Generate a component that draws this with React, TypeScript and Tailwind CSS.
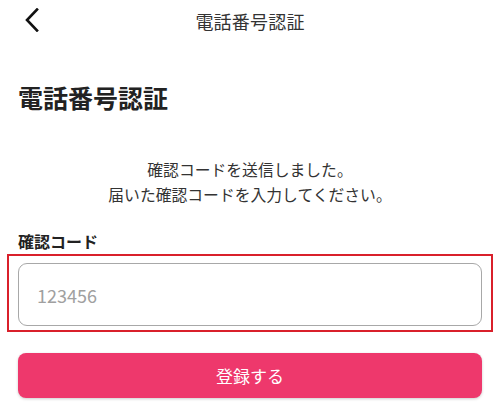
export default function App() {
  const font = { fontFamily: '"Noto Sans CJK JP", "Noto Sans", sans-serif' };
  return (
    <div className="w-[500px] h-[418px] bg-white overflow-hidden" style={font}>
      {/* header */}
      <div className="relative flex items-center justify-center h-[42px]">
        <button className="absolute left-[22px] top-[7px] w-[20px] h-[26px] flex items-center justify-center">
          <svg width="14" height="24" viewBox="0 0 14 24" fill="none">
            <path d="M12 1.5 L2 12 L12 22.5" stroke="#111" strokeWidth="2.6" strokeLinecap="square" />
          </svg>
        </button>
        <h1 className="text-[18px] leading-none text-[#333] tracking-[0.2px]">電話番号認証</h1>
      </div>

      <div className="px-[18px]">
        <h2 className="mt-[40px] text-[25px] leading-[30px] font-bold text-[#222]">電話番号認証</h2>

        <p className="mt-[45px] text-center text-[15.8px] leading-[25px] text-[#333]">
          確認コードを送信しました。
          <br />
          届いた確認コードを入力してください。
        </p>

        <label className="block mt-[24px] text-[16px] leading-[20px] font-bold text-[#222]">確認コード</label>

        <div className="-mx-[11px] mt-[3px] border-2 border-[#d9202b] px-[9px] pt-[7px] pb-[4px]">
          <input
            className="w-full h-[63px] rounded-[9px] border border-[#a8a8a8] px-[18px] text-[18px] text-[#333] placeholder:text-[#a0a0a0] outline-none"
            placeholder="123456"
            style={font}
          />
        </div>

        <button className="mt-[21px] w-full h-[45px] rounded-[8px] bg-[#ee386c] text-white text-[17px] shadow-[0_1px_3px_rgba(0,0,0,0.2)]">
          登録する
        </button>
      </div>
    </div>
  );
}
